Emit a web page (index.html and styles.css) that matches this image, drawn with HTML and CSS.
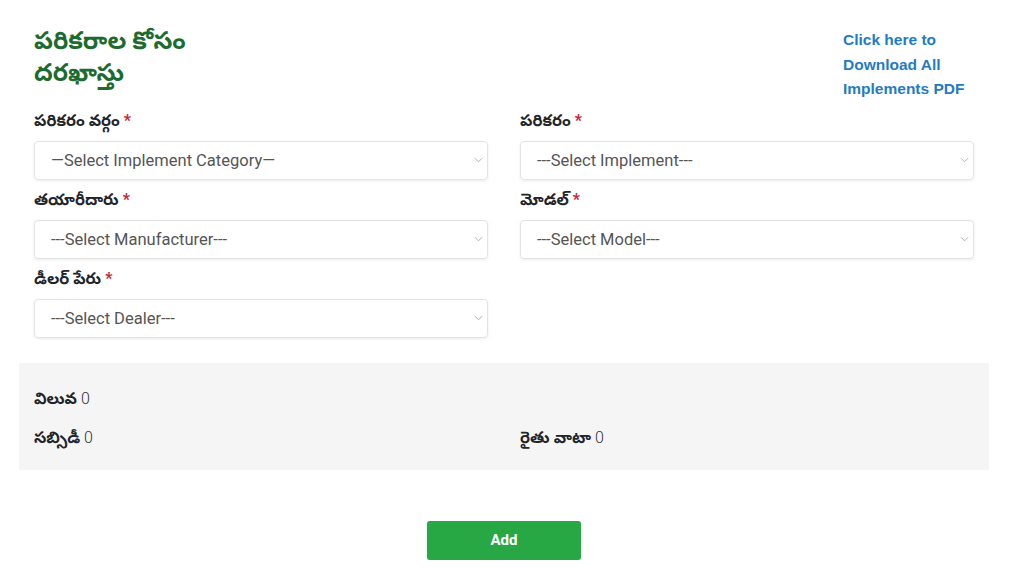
FILE: index.html
```html
<!DOCTYPE html>
<html lang="te">
<head>
<meta charset="utf-8">
<title>పరికరాల కోసం దరఖాస్తు</title>
<link rel="stylesheet" href="styles.css">
</head>
<body>
<div class="page">
  <div class="header">
    <h1 class="title">పరికరాల కోసం<br>దరఖాస్తు</h1>
    <a class="pdf-link" href="#">Click here to Download All Implements PDF</a>
  </div>
  <div class="form-grid">
    <div class="field">
      <label class="label">పరికరం వర్గం <span class="req">*</span></label>
      <div class="select"><span>—Select Implement Category—</span><svg class="chev" viewBox="0 0 10 6" width="9" height="6"><path d="M1 1l4 4 4-4" fill="none" stroke="#b0b0b0" stroke-width="1.1"/></svg></div>
    </div>
    <div class="field">
      <label class="label">పరికరం <span class="req">*</span></label>
      <div class="select"><span>---Select Implement---</span><svg class="chev" viewBox="0 0 10 6" width="9" height="6"><path d="M1 1l4 4 4-4" fill="none" stroke="#b0b0b0" stroke-width="1.1"/></svg></div>
    </div>
    <div class="field">
      <label class="label">తయారీదారు <span class="req">*</span></label>
      <div class="select"><span>---Select Manufacturer---</span><svg class="chev" viewBox="0 0 10 6" width="9" height="6"><path d="M1 1l4 4 4-4" fill="none" stroke="#b0b0b0" stroke-width="1.1"/></svg></div>
    </div>
    <div class="field">
      <label class="label">మోడల్ <span class="req">*</span></label>
      <div class="select"><span>---Select Model---</span><svg class="chev" viewBox="0 0 10 6" width="9" height="6"><path d="M1 1l4 4 4-4" fill="none" stroke="#b0b0b0" stroke-width="1.1"/></svg></div>
    </div>
    <div class="field">
      <label class="label">డీలర్ పేరు <span class="req">*</span></label>
      <div class="select"><span>---Select Dealer---</span><svg class="chev" viewBox="0 0 10 6" width="9" height="6"><path d="M1 1l4 4 4-4" fill="none" stroke="#b0b0b0" stroke-width="1.1"/></svg></div>
    </div>
  </div>
  <div class="summary">
    <div class="sum-row">
      <div class="sum-item"><b>విలువ</b> <span class="num">0</span></div>
    </div>
    <div class="sum-row">
      <div class="sum-item"><b>సబ్సిడీ</b> <span class="num">0</span></div>
      <div class="sum-item"><b>రైతు వాటా</b> <span class="num">0</span></div>
    </div>
  </div>
  <div class="actions">
    <button class="btn-add" type="button">Add</button>
  </div>
</div>
</body>
</html>
```

FILE: styles.css
```css
* { box-sizing: border-box; }
html, body { margin: 0; padding: 0; background: #fff; }
body {
  font-family: Roboto, "Noto Sans", "Noto Sans Telugu", "Liberation Sans", sans-serif;
  color: #212529;
  font-size: 15px;
}
.page {
  width: 1024px;
  padding: 25px 50px 0 19px;
}
.header {
  display: flex;
  justify-content: space-between;
  align-items: flex-start;
  padding: 0 6px 0 15px;
}
.title {
  margin: 0;
  font-size: 24.5px;
  line-height: 32px;
  font-weight: 700;
  color: #1d6b2f;
}
.pdf-link {
  width: 125px;
  margin-top: 3px;
  font-family: "Liberation Sans", Arial, sans-serif;
  font-size: 15.5px;
  line-height: 24.5px;
  font-weight: 700;
  color: #1f7cc4;
  text-decoration: none;
}
.form-grid {
  display: grid;
  grid-template-columns: 454px 454px;
  column-gap: 32px;
  padding: 0 15px;
  margin-top: 9px;
}
.field { display: flex; flex-direction: column; }
.label {
  font-weight: 700;
  font-size: 16px;
  line-height: 20px;
  height: 20px;
  margin-bottom: 10px;
}
.req { color: #c0273a; }
.select {
  height: 39px;
  border: 1px solid #e3e3e3;
  border-radius: 4px;
  box-shadow: 0 1px 3px rgba(0,0,0,0.08);
  display: flex;
  align-items: center;
  justify-content: space-between;
  padding: 0 4px 0 16px;
  color: #555;
  font-size: 16.5px;
  margin-bottom: 10px;
}
.chev { flex: none; }
.summary {
  margin-top: 15px;
  width: 970px;
  height: 107px;
  background: #f5f5f5;
  padding: 26px 15px 0;
}
.sum-row {
  display: grid;
  grid-template-columns: 454px 454px;
  column-gap: 32px;
  height: 39px;
  font-size: 16px;
}
.sum-item b { font-weight: 700; }
.num { font-weight: 300; color: #333; }
.actions {
  display: flex;
  justify-content: center;
  width: 970px;
  margin-top: 51px;
}
.btn-add {
  width: 154px;
  height: 39px;
  background: #28a745;
  border: none;
  border-radius: 3px;
  color: #fff;
  font-weight: 700;
  font-size: 15px;
  font-family: Roboto, "Liberation Sans", sans-serif;
  box-shadow: 0 1px 2px rgba(0,0,0,0.15);
}
```
